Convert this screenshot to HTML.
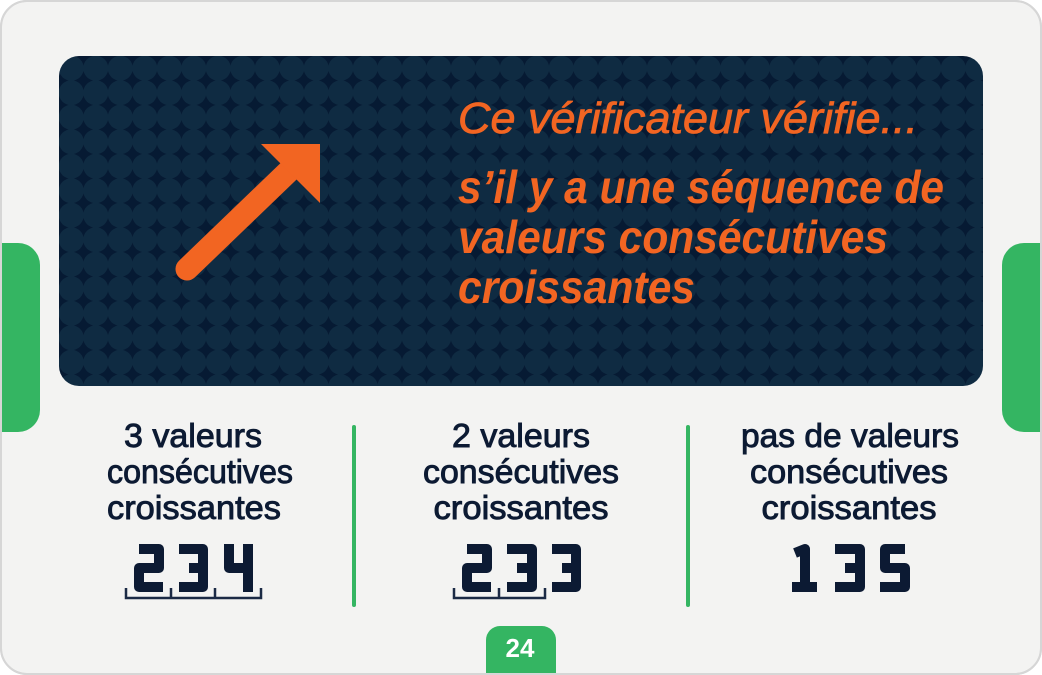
<!DOCTYPE html>
<html><head><meta charset="utf-8"><style>
html,body{margin:0;padding:0;background:#fff;}
svg{display:block}
</style></head><body>
<svg width="1042" height="675" viewBox="0 0 1042 675" xmlns="http://www.w3.org/2000/svg">
<defs>
<pattern id="dots" x="59" y="56" width="24.5" height="24.5" patternUnits="userSpaceOnUse">
<rect width="24.5" height="24.5" fill="#061a33"/>
<circle cx="12.25" cy="12.25" r="12.5" fill="#0f2b42"/>
</pattern>
</defs>
<rect x="1" y="1" width="1040" height="673" rx="26" fill="#f3f3f2" stroke="#d6d6d6" stroke-width="2"/>
<rect x="-30" y="243" width="70" height="189" rx="22" fill="#34b562"/>
<rect x="1002" y="243" width="70" height="189" rx="22" fill="#34b562"/>
<rect x="59" y="56" width="924" height="330" rx="20" fill="url(#dots)"/>
<line x1="187" y1="269" x2="292" y2="168" stroke="#f26522" stroke-width="23" stroke-linecap="round"/>
<polygon points="261,144 320,144 320,203" fill="#f26522"/>
<g font-family="'Liberation Sans Narrow','Liberation Sans',sans-serif" font-style="italic" fill="#f26522">
<text x="458" y="133" font-size="44" stroke="#f26522" stroke-width="0.8" textLength="460" lengthAdjust="spacingAndGlyphs">Ce vérificateur vérifie...</text>
<g font-weight="bold" font-size="46">
<text x="458" y="203" textLength="486" lengthAdjust="spacingAndGlyphs">s’il y a une séquence de</text>
<text x="458" y="253" textLength="430" lengthAdjust="spacingAndGlyphs">valeurs consécutives</text>
<text x="458" y="303" textLength="237" lengthAdjust="spacingAndGlyphs">croissantes</text>
</g></g>
<g font-family="'Liberation Sans Narrow','Liberation Sans',sans-serif" font-size="33" fill="#0c1a33" stroke="#0c1a33" stroke-width="0.9" text-anchor="middle">
<text x="193" y="447" textLength="138" lengthAdjust="spacingAndGlyphs">3 valeurs</text>
<text x="200" y="483" textLength="186" lengthAdjust="spacingAndGlyphs">consécutives</text>
<text x="194" y="519" textLength="174" lengthAdjust="spacingAndGlyphs">croissantes</text>
<text x="521" y="447" textLength="138" lengthAdjust="spacingAndGlyphs">2 valeurs</text>
<text x="521" y="483" textLength="196" lengthAdjust="spacingAndGlyphs">consécutives</text>
<text x="521" y="519" textLength="175" lengthAdjust="spacingAndGlyphs">croissantes</text>
<text x="850" y="447" textLength="218" lengthAdjust="spacingAndGlyphs">pas de valeurs</text>
<text x="849" y="483" textLength="198" lengthAdjust="spacingAndGlyphs">consécutives</text>
<text x="849" y="519" textLength="175" lengthAdjust="spacingAndGlyphs">croissantes</text>
</g>
<line x1="354" y1="427" x2="354" y2="605" stroke="#34b562" stroke-width="4" stroke-linecap="round"/>
<line x1="688" y1="427" x2="688" y2="605" stroke="#34b562" stroke-width="4" stroke-linecap="round"/>
<g fill="none" stroke="#0c1a33" stroke-width="10" stroke-linejoin="round">
<path d="M139,549 H159 V568 H139 V587 H163"/>
<path d="M179,549 H203 V587 H179 M189,568 H203"/>
<path d="M229,544 V568 H248 M248,544 V592"/>
<path d="M467,549 H487 V568 H467 V587 H491"/>
<path d="M507,549 H532 V587 H507 M517,568 H532"/>
<path d="M552,549 H576 V587 H552 M562,568 H576"/>
<path d="M795,553 L805,549 V587 M792,587 H817"/>
<path d="M835,549 H860 V587 H835 M845,568 H860"/>
<path d="M905,549 H885 V568 H905 V587 H880"/>
</g>
<g fill="none" stroke="#1b2a45" stroke-width="2.5">
<path d="M126,588 V598 H261 V588 M171,588 V598 M215,588 V598"/>
<path d="M454,588 V598 H545 V588 M499,588 V598"/>
</g>
<rect x="486" y="626" width="70" height="70" rx="14" fill="#34b562"/>
<text x="520" y="657" font-family="'Liberation Sans',sans-serif" font-weight="bold" font-size="26" fill="#fff" text-anchor="middle">24</text>
<rect x="1" y="1" width="1040" height="673" rx="26" fill="none" stroke="#d6d6d6" stroke-width="2"/>
</svg>
</body></html>
